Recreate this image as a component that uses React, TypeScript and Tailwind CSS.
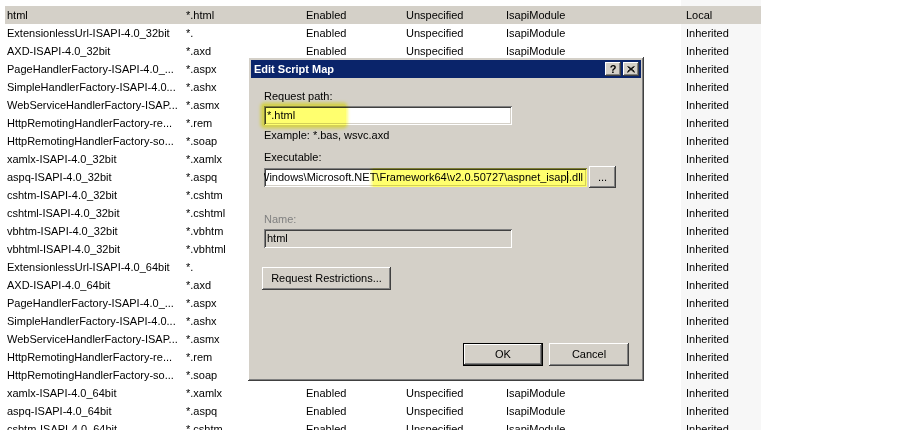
const rows: [string, string][] = [
  ['ExtensionlessUrl-ISAPI-4.0_32bit', '*.'],
  ['AXD-ISAPI-4.0_32bit', '*.axd'],
  ['PageHandlerFactory-ISAPI-4.0_...', '*.aspx'],
  ['SimpleHandlerFactory-ISAPI-4.0...', '*.ashx'],
  ['WebServiceHandlerFactory-ISAP...', '*.asmx'],
  ['HttpRemotingHandlerFactory-re...', '*.rem'],
  ['HttpRemotingHandlerFactory-so...', '*.soap'],
  ['xamlx-ISAPI-4.0_32bit', '*.xamlx'],
  ['aspq-ISAPI-4.0_32bit', '*.aspq'],
  ['cshtm-ISAPI-4.0_32bit', '*.cshtm'],
  ['cshtml-ISAPI-4.0_32bit', '*.cshtml'],
  ['vbhtm-ISAPI-4.0_32bit', '*.vbhtm'],
  ['vbhtml-ISAPI-4.0_32bit', '*.vbhtml'],
  ['ExtensionlessUrl-ISAPI-4.0_64bit', '*.'],
  ['AXD-ISAPI-4.0_64bit', '*.axd'],
  ['PageHandlerFactory-ISAPI-4.0_...', '*.aspx'],
  ['SimpleHandlerFactory-ISAPI-4.0...', '*.ashx'],
  ['WebServiceHandlerFactory-ISAP...', '*.asmx'],
  ['HttpRemotingHandlerFactory-re...', '*.rem'],
  ['HttpRemotingHandlerFactory-so...', '*.soap'],
  ['xamlx-ISAPI-4.0_64bit', '*.xamlx'],
  ['aspq-ISAPI-4.0_64bit', '*.aspq'],
  ['cshtm-ISAPI-4.0_64bit', '*.cshtm'],
];

const raised =
  'bg-[#d4d0c8] shadow-[inset_-1px_-1px_0_#404040,inset_1px_1px_0_#ffffff,inset_-2px_-2px_0_#808080,inset_2px_2px_0_#d4d0c8]';
const sunken =
  'shadow-[inset_1px_1px_0_#808080,inset_-1px_-1px_0_#ffffff,inset_2px_2px_0_#404040,inset_-2px_-2px_0_#d4d0c8]';

const Row = ({ cells, selected = false }: { cells: string[]; selected?: boolean }) => (
  <div
    className={`grid h-[18px] w-[756px] grid-cols-[179px_120px_100px_100px_177px_80px] items-center whitespace-nowrap ${
      selected ? 'bg-[#d4d0c8]' : ''
    }`}
  >
    <span className="pl-[2px]">{cells[0]}</span>
    <span className="pl-[2px]">{cells[1]}</span>
    <span className="pl-[2px]">{cells[2]}</span>
    <span className="pl-[2px]">{cells[3]}</span>
    <span className="pl-[2px]">{cells[4]}</span>
    <span className={`flex h-full items-center pl-[5px] ${selected ? '' : 'bg-[#f7f7f7]'}`}>{cells[5]}</span>
  </div>
);

const Highlight = ({ className }: { className: string }) => (
  <span
    className={`pointer-events-none absolute rounded-[3px] bg-[#ffff6e] mix-blend-multiply shadow-[0_0_3px_2px_rgba(255,255,110,0.85)] ${className}`}
  />
);

const Dialog = () => (
  <div
    className={`absolute left-[248px] top-[57px] flex h-[324px] w-[396px] flex-col p-[3px] ${raised}`}
  >
    <div className="flex h-[18px] items-center justify-between bg-[#0a246a] pl-[3px] pr-[2px]">
      <span className="text-[11px] font-bold text-white">Edit Script Map</span>
      <div className="flex gap-[2px]">
        <span className={`flex h-[14px] w-[16px] items-center justify-center text-[11px] font-bold leading-none text-black ${raised}`}>
          ?
        </span>
        <span className={`flex h-[14px] w-[16px] items-center justify-center ${raised}`}>
          <svg width="8" height="7" viewBox="0 0 8 7">
            <path d="M0.5 0.5 L7.5 6.5 M1.5 0.5 L7.5 5.5 M7.5 0.5 L0.5 6.5 M6.5 0.5 L0.5 5.5" stroke="#000" strokeWidth="1" fill="none" />
          </svg>
        </span>
      </div>
    </div>

    <div className="relative flex flex-1 flex-col pl-[13px] pr-[12px] pb-[12px]">
      <div className="mt-[12px] h-[13px] leading-[13px]">Request path:</div>
      <div className={`relative mt-[3px] flex h-[19px] w-[248px] items-center bg-white pl-[3px] ${sunken}`}>
        *.html
        <Highlight className="-left-[2px] -top-[2px] h-[23px] w-[84px]" />
      </div>
      <div className="mt-[4px] h-[13px] leading-[13px]">Example: *.bas, wsvc.axd</div>
      <div className="mt-[9px] h-[13px] leading-[13px]">Executable:</div>
      <div className="mt-[2px] flex items-center gap-[2px]">
        <div className={`relative flex h-[19px] w-[323px] items-center overflow-hidden bg-white pl-[2px] whitespace-nowrap ${sunken}`}>
          <span className="-ml-[7px]">
            Windows\Microsoft.NET\Framework64\v2.0.50727\aspnet_isap
            <span className="relative">
              i<span className="absolute left-0 top-0 h-full w-px bg-black" />
            </span>
            .dll
          </span>
          <Highlight className="left-[109px] -top-[1px] h-[21px] w-[215px]" />
        </div>
        <div className={`flex h-[22px] w-[27px] items-center justify-center ${raised}`}>...</div>
      </div>
      <div className="mt-[25px] h-[13px] leading-[13px] text-[#808080]">Name:</div>
      <div className={`mt-[3px] flex h-[19px] w-[248px] items-center bg-[#d4d0c8] pl-[3px] ${sunken}`}>html</div>
      <div
        className={`-ml-[2px] mt-[19px] flex h-[23px] w-[129px] items-center justify-center ${raised}`}
      >
        Request Restrictions...
      </div>
      <div className="mt-auto flex justify-end gap-[6px]">
        <div className="flex h-[23px] w-[80px] items-center justify-center border border-black">
          <div className={`flex h-full w-full items-center justify-center ${raised}`}>OK</div>
        </div>
        <div className={`flex h-[23px] w-[80px] items-center justify-center ${raised}`}>Cancel</div>
      </div>
    </div>
  </div>
);

const App = () => (
  <div className="relative h-[430px] w-[901px] overflow-hidden bg-white font-['Liberation_Sans',Arial,sans-serif] text-[11px] text-black">
    <div className="pl-[5px]">
      <div className="grid h-[6px] w-[756px] grid-cols-[179px_120px_100px_100px_177px_80px]">
        <span />
        <span />
        <span />
        <span />
        <span />
        <span className="bg-[#f7f7f7]" />
      </div>
      <Row cells={['html', '*.html', 'Enabled', 'Unspecified', 'IsapiModule', 'Local']} selected />
      {rows.map(([name, ext], i) => (
        <Row key={i} cells={[name, ext, 'Enabled', 'Unspecified', 'IsapiModule', 'Inherited']} />
      ))}
    </div>
    <Dialog />
  </div>
);

export default App;
